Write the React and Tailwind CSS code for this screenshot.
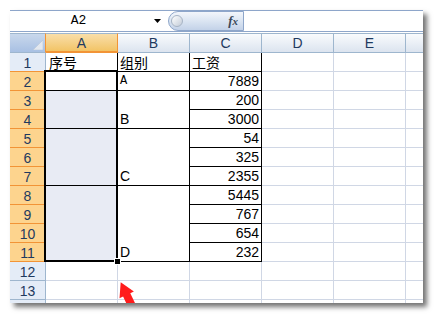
import React from 'react';

const salary = { 2: 7889, 3: 200, 4: 3000, 5: 54, 6: 325, 7: 2355, 8: 5445, 9: 767, 10: 654, 11: 232 };
const groups = {
  2: { span: 1, label: 'A' },
  3: { span: 2, label: 'B' },
  5: { span: 3, label: 'C' },
  8: { span: 4, label: 'D' },
};
const spanClass = { 1: '', 2: 'row-span-2', 3: 'row-span-3', 4: 'row-span-4' };

const cjk = "font-['Noto_Sans_CJK_SC',sans-serif]";
const grid = 'border-r border-b border-[#d0d7e5] bg-white';
const boxed = 'border-r border-b border-black';
const cell = 'flex items-end overflow-hidden whitespace-nowrap pb-[1px] text-[14px] leading-[16px] text-black';

const RowHeader = ({ n }) => {
  const hot = n >= 2 && n <= 11;
  let tone = 'bg-[#e4ecf7] border-r-[#9eb6ce] border-b-[#9eb6ce]';
  if (hot) tone = 'bg-[#fdd48e] border-r-[#f29436] border-b-[#f29436]';
  if (n === 1) tone = 'bg-[#e4ecf7] border-r-[#9eb6ce] border-b-[#f29436]';
  return (
    <div className={`flex items-end justify-center border-r border-b text-[14px] leading-[16px] text-[#1f3a5f] ${tone}`}>
      {n <= 13 ? n : null}
    </div>
  );
};

const Row = ({ n }) => {
  const out = [<RowHeader key="h" n={n} />];

  if (n === 1) {
    out.push(<div key="a" className={`${cell} ${boxed} bg-white pl-[3px] ${cjk}`}>序号</div>);
    out.push(<div key="b" className={`${cell} ${boxed} bg-white pl-[2px] ${cjk}`}>组别</div>);
    out.push(<div key="c" className={`${cell} ${boxed} bg-white pl-[2px] ${cjk}`}>工资</div>);
  } else if (n <= 11) {
    const g = groups[n];
    if (g) {
      out.push(
        <div key="a" className={`${boxed} ${spanClass[g.span]} ${n === 2 ? 'bg-white' : 'bg-[#e8ebf4]'}`} />
      );
      out.push(
        <div key="b" className={`${cell} ${boxed} ${spanClass[g.span]} bg-white pl-[2px]`}>
          {n === 2 ? (
            <span className="font-['Liberation_Mono',monospace] text-[12px]">A</span>
          ) : (
            g.label
          )}
        </div>
      );
    }
    out.push(
      <div key="c" className={`${cell} ${boxed} justify-end bg-white pr-[2px]`}>
        {salary[n]}
      </div>
    );
  } else {
    out.push(<div key="a" className={grid} />);
    out.push(<div key="b" className={grid} />);
    out.push(<div key="c" className={grid} />);
  }

  out.push(<div key="d" className={grid} />);
  out.push(<div key="e" className={grid} />);
  out.push(<div key="f" className="border-b border-[#d0d7e5] bg-white" />);
  return out;
};

const colHead = 'flex items-center justify-center border-r border-b border-[#9eb6ce] bg-linear-to-b from-[#f9fbfd] to-[#dce4ef] text-[14px] leading-[18px] text-[#1f3a5f]';

export default function App() {
  const rows = Array.from({ length: 14 }, (_, i) => i + 1);

  return (
    <div className="h-[315px] w-[434px] bg-white pl-[10px] pt-[10px] font-['Liberation_Sans',sans-serif]">
      <div className="relative flex h-[293px] w-[413px] flex-col overflow-hidden bg-white shadow-[4px_4px_5px_rgba(0,0,0,0.55)]">
        {/* formula bar */}
        <div className="flex h-[22px] shrink-0 items-stretch border-y border-[#8ea6ca] bg-white">
          <div className="flex w-[137px] items-center justify-center font-['Liberation_Mono',monospace] text-[13px] text-black">
            A2
          </div>
          <div className="flex w-[21px] items-center justify-center">
            <svg width="7" height="4" viewBox="0 0 7 4">
              <polygon points="0,0 7,0 3.5,4" fill="#000" />
            </svg>
          </div>
          <div className="flex w-[76px] items-center justify-between rounded-l-full border border-[#8ea6ca] bg-linear-to-b from-[#f3f6fb] via-[#dbe5f2] to-[#c3d2e8] pl-[2px] pr-[5px]">
            <div className="h-[12px] w-[12px] rounded-full border border-[#a7b4c5] bg-linear-to-br from-white to-[#c3ccd8]" />
            <span className="font-['Liberation_Serif',serif] text-[13px] font-bold italic text-[#3b4859]">
              f<span className="text-[11px]">x</span>
            </span>
          </div>
          <div className="flex-1" />
        </div>
        <div className="h-[1px] shrink-0 bg-white" />

        {/* sheet */}
        <div className="grid grid-cols-[36px_72px_72px_72px_72px_72px_1fr] grid-rows-[20px_repeat(14,19px)]">
          <div className="relative border-t border-r border-b border-t-[#9eb6ce] border-r-[#f29436] border-b-[#9eb6ce] bg-linear-to-b from-[#c9d8ec] to-[#a8c0e3]">
            <svg className="absolute right-[2px] bottom-[2px]" width="10" height="10" viewBox="0 0 10 10">
              <polygon points="10,0 10,10 0,10" fill="#e3e8ef" stroke="#b9c6d6" strokeWidth="0.6" />
            </svg>
          </div>
          {['A', 'B', 'C', 'D', 'E'].map((c) =>
            c === 'A' ? (
              <div
                key={c}
                className="flex items-center justify-center border-t border-r border-b-2 border-t-[#9eb6ce] border-r-[#f29436] border-b-[#f29436] bg-linear-to-b from-[#f9dea9] to-[#f2c465] text-[14px] leading-[18px] text-[#1f3a5f]"
              >
                {c}
              </div>
            ) : (
              <div key={c} className={`${colHead} border-t`}>
                {c}
              </div>
            )
          )}
          <div className="border-t border-b border-[#9eb6ce] bg-linear-to-b from-[#f9fbfd] to-[#dce4ef]" />

          {rows.map((n) => (
            <Row key={n} n={n} />
          ))}
        </div>

        {/* selection outline and fill handle */}
        <div className="absolute top-[60px] left-[34px] h-[192px] w-[74px] border-2 border-black" />
        <div className="absolute top-[248px] left-[104px] h-[7px] w-[7px] border border-white bg-black" />

        {/* red arrow */}
        <svg className="absolute top-[270px] left-[105px]" width="30" height="36" viewBox="0 0 30 36">
          <polygon
            points="5.7,2.3 18.9,11.5 15.3,13.2 23.9,31.2 16.7,34.6 8.1,16.6 4.5,18.3"
            fill="#ff1c1c"
          />
        </svg>
      </div>
    </div>
  );
}
